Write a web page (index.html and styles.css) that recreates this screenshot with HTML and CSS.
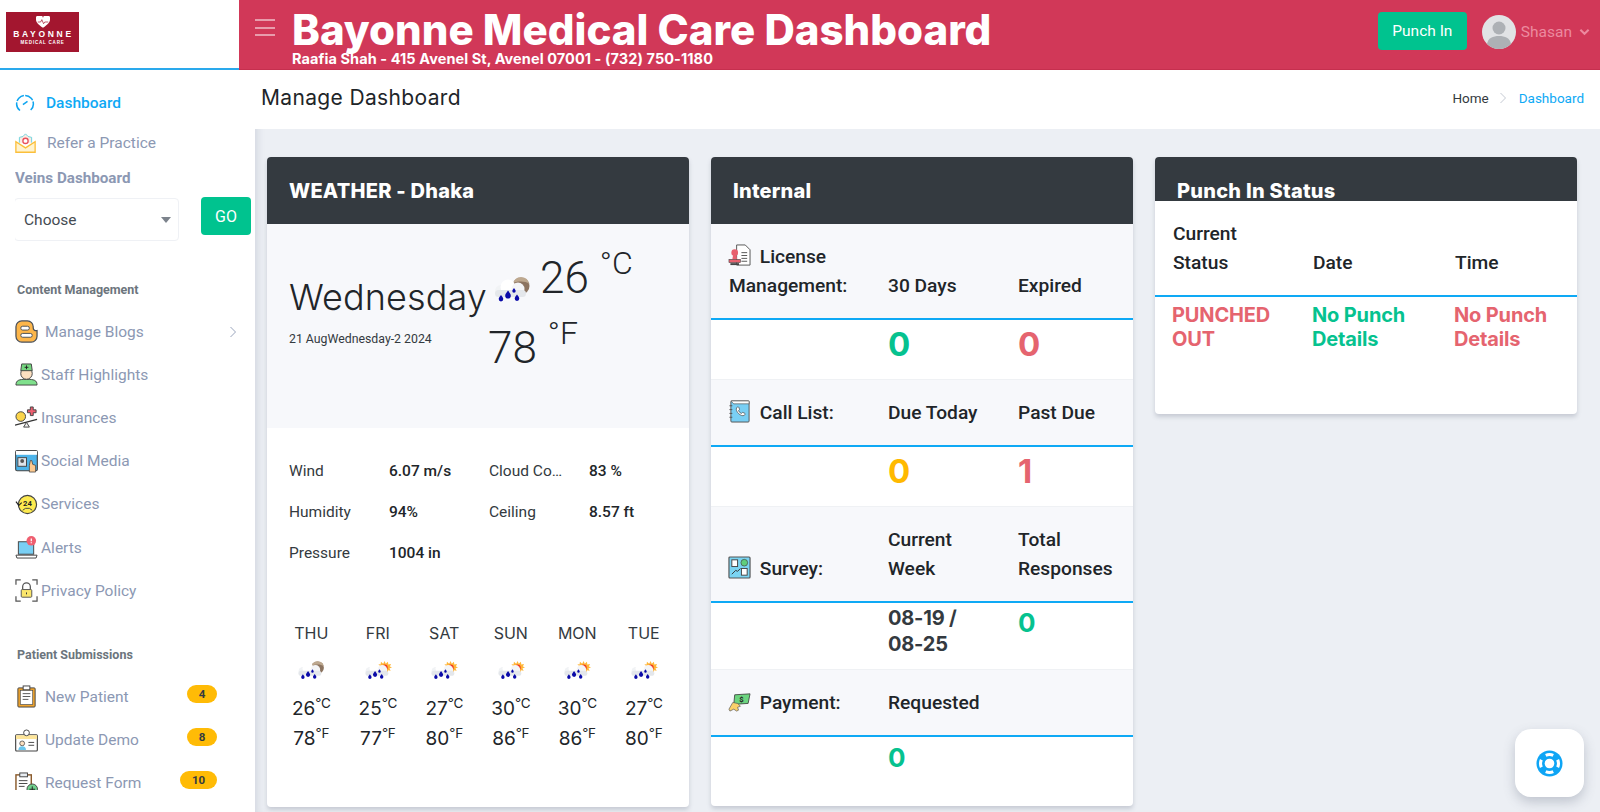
FILE: index.html
```html
<!DOCTYPE html>
<html lang="en">
<head>
<meta charset="utf-8">
<title>Bayonne Medical Care Dashboard</title>
<link rel="stylesheet" href="styles.css">
</head>
<body>
<svg class="defs" aria-hidden="true">
  <symbol id="w-cloud" viewBox="0 0 38 27">
    <circle cx="8" cy="14" r="6" fill="#f1f3f5"/><circle cx="15" cy="10" r="7.500" fill="#fff"/><circle cx="25" cy="12" r="6.500" fill="#f4f5f7"/>
    <rect x="2" y="13" width="31" height="7" rx="3.500" fill="#e4e7eb"/>
    <path d="M15 13.500c1.800 2.500 2.800 3.600 2.800 5.200a2.800 2.800 0 0 1-5.600 0c0-1.600 1-2.700 2.800-5.200zM8 18c1.400 1.800 2.300 2.800 2.300 4.100a2.300 2.300 0 0 1-4.600 0C5.700 20.800 6.600 19.800 8 18zM24 17.500c1.400 1.800 2.300 2.800 2.300 4.100a2.300 2.300 0 0 1-4.600 0c0-1.300.9-2.300 2.300-4.100zM21 11c1 1.400 1.700 2.100 1.700 3.100a1.700 1.700 0 0 1-3.400 0c0-1 .7-1.700 1.700-3.100z" fill="#0a0aa8"/>
  </symbol>
  <symbol id="w-moon" viewBox="0 0 38 27">
    <circle cx="28" cy="9" r="8.500" fill="#8c7460"/><path d="M20 6a8.500 8.500 0 0 1 16.300 1c-4-3-10-3-16.300-1z" fill="#bda88f"/>
    <use href="#w-cloud" width="38" height="27"/>
  </symbol>
  <symbol id="w-sun" viewBox="0 0 38 27">
    <path d="M28 0l1.500 3.500 3-2.500.5 3.700 3.700-.7-1.700 3.300L38 8.500l-3.500 1.500 1.700 3.300-3.700-.7-.5 3.700-3-2.500-1.500 3.500-1.500-3.500-3 2.500-.5-3.700-3.700.7 1.700-3.300L17 8.500l3.500-1.200-1.700-3.300 3.700.7.500-3.700 3 2.500z" fill="#ffb638"/><circle cx="28" cy="9" r="4.200" fill="#ef3b24"/>
    <use href="#w-cloud" width="38" height="27"/>
  </symbol>
</svg>

<div class="app">
  <header class="header">
    <div class="brand">
      <div class="logo">
        <svg class="logo-heart" viewBox="0 0 24 20"><path d="M12 20C4 14 0 10 0 5.500A5.500 5.500 0 0 1 12 3a5.500 5.500 0 0 1 12 2.500C24 10 20 14 12 20z" fill="#fff"/><path d="M3 10h5l2-4 3 7 2-3h6" fill="none" stroke="#a3152f" stroke-width="1.200"/></svg>
        <div class="logo-name">BAYONNE</div>
        <div class="logo-sub">MEDICAL CARE</div>
      </div>
    </div>
    <div class="topbar">
      <div class="burger"><span></span><span></span><span></span></div>
      <div class="title-block">
        <div class="title">Bayonne Medical Care Dashboard</div>
        <div class="subtitle">Raafia Shah - 415 Avenel St, Avenel 07001 - (732) 750-1180</div>
      </div>
      <button class="punch-btn">Punch In</button>
      <div class="user">
        <svg class="avatar" viewBox="0 0 34 34"><circle cx="17" cy="17" r="17" fill="#e1e3e5"/><circle cx="17" cy="13" r="6.500" fill="#adb1b5"/><path d="M5 29c1-6 6-8 12-8s11 2 12 8a17 17 0 0 1-24 0z" fill="#adb1b5"/></svg>
        <span class="user-name">Shasan</span>
        <svg class="user-caret" viewBox="0 0 12 8"><path d="M1.500 1.500L6 6l4.500-4.500" fill="none" stroke="currentColor" stroke-width="2.200"/></svg>
      </div>
    </div>
  </header>

  <div class="body-row">
    <aside class="sidebar">
      <nav class="nav">
        <a class="nav-top active">
          <svg class="ico ico-dash" viewBox="0 0 24 24"><path d="M6 21a10 10 0 1 1 12 0" fill="none" stroke="#0ea5f0" stroke-width="1.800" stroke-dasharray="11 1.500"/><path d="M9.500 14L15 10" stroke="#0ea5f0" stroke-width="1.800"/></svg>
          <span>Dashboard</span>
        </a>
        <a class="nav-top">
          <svg class="ico ico-refer" viewBox="0 0 24 24"><path d="M5 11V5l4-1 3-3 3 3 4 1v6" fill="#fde9e2" stroke="#5fd0da"/><circle cx="12" cy="9" r="3" fill="#fff" stroke="#e8505b" stroke-width="1.500"/><path d="M1 10v12h22V10l-11 7z" fill="#fff3cf" stroke="#fbbf3a" stroke-width="1.500"/></svg>
          <span class="refer-text">Refer a Practice</span>
        </a>
        <div class="veins">Veins Dashboard</div>
        <div class="choose-row">
          <div class="select"><span>Choose</span><i class="select-caret"></i></div>
          <button class="go">GO</button>
        </div>

        <div class="section first">Content Management</div>
        <a class="item wide">
          <svg class="ico" viewBox="0 0 24 24"><path d="M7 1h6a6 6 0 0 1 6 6v1a3 3 0 0 0 4 3v6a6 6 0 0 1-6 6H7a6 6 0 0 1-6-6V7a6 6 0 0 1 6-6z" fill="#fdb64a" stroke="#4a4f57" stroke-width="1.300"/><rect x="6" y="6.500" width="9" height="4" rx="2" fill="#fff" stroke="#4a4f57"/><rect x="6" y="14" width="12" height="4" rx="2" fill="#fff" stroke="#4a4f57"/></svg>
          <span>Manage Blogs</span>
          <svg class="chev" viewBox="0 0 8 12"><path d="M1.500 1l5 5-5 5" fill="none" stroke="#9aa5bd"/></svg>
        </a>
        <a class="item">
          <svg class="ico" viewBox="0 0 24 24"><path d="M1 23c0-5 3-6 11-6s11 1 11 6z" fill="#7fe08c" stroke="#444"/><circle cx="12" cy="11" r="6" fill="#fde0c0" stroke="#444"/><path d="M7 1h10l1 7H6z" fill="#74d67f" stroke="#444"/><path d="M12 2.500v4M10 4.500h4" stroke="#222"/></svg>
          <span>Staff Highlights</span>
        </a>
        <a class="item">
          <svg class="ico" viewBox="0 0 24 24"><circle cx="6" cy="11" r="5" fill="#fbd44b" stroke="#444"/><path d="M14 5h3V2h3v3h3v3h-3v3h-3V8h-3z" fill="#ef5f70" stroke="#444" transform="translate(-1 -1)"/><path d="M0 20L23 14" stroke="#333" stroke-width="1.200"/><path d="M9 22l3-5 3 5z" fill="#eee" stroke="#444"/></svg>
          <span>Insurances</span>
        </a>
        <a class="item">
          <svg class="ico" viewBox="0 0 24 24"><rect x=".7" y=".7" width="22.600" height="21" rx="1.500" fill="#4db4ea" stroke="#444" stroke-width="1.200"/><rect x="1" y="1" width="22" height="4" fill="#fff"/><rect x="3" y="8" width="9" height="9" fill="#dfe4ea" stroke="#444"/><circle cx="7.500" cy="11.500" r="2" fill="#555"/><path d="M15 23v-7l1-5 1.500 0 1 4 3 1v7z" fill="#fcc98f" stroke="#444" stroke-width=".8"/></svg>
          <span>Social Media</span>
        </a>
        <a class="item">
          <svg class="ico" viewBox="0 0 24 24"><circle cx="13" cy="12" r="9.500" fill="#fdea4f" stroke="#444" stroke-width="1.200"/><path d="M1 9l3 4 3-3" fill="none" stroke="#222" stroke-width="1.200"/><path d="M8 18l3-2h4l3 2" fill="none" stroke="#444"/><text class="ico-24" x="13" y="13.500">24</text></svg>
          <span>Services</span>
        </a>
        <a class="item">
          <svg class="ico" viewBox="0 0 24 24"><rect x="3.500" y="6" width="16" height="13" fill="#79cff4" stroke="#444"/><path d="M1 20h22l-1 3H2z" fill="#fff" stroke="#444"/><circle cx="17" cy="5" r="5" fill="#ef5f70"/><path d="M17 2.500v3M17 6.500v1" stroke="#fff" stroke-width="1.300"/></svg>
          <span>Alerts</span>
        </a>
        <a class="item">
          <svg class="ico" viewBox="0 0 24 24"><path d="M1 6V1h5M18 1h5v5M23 18v5h-5M6 23H1v-5" fill="none" stroke="#555" stroke-width="1.300"/><path d="M8 11V8a4 4 0 0 1 8 0v3" fill="none" stroke="#555" stroke-width="1.300"/><rect x="6.500" y="11" width="11" height="8" rx="1" fill="#fbe66b" stroke="#555"/><path d="M12 14v2" stroke="#333"/></svg>
          <span>Privacy Policy</span>
        </a>

        <div class="section second">Patient Submissions</div>
        <a class="item wide">
          <svg class="ico" viewBox="0 0 24 24"><rect x="3" y="3" width="18" height="20" rx="1" fill="#f2a52c" stroke="#444"/><rect x="5.500" y="5.500" width="13" height="15" fill="#fff" stroke="#444" stroke-width=".7"/><rect x="8.500" y="1" width="7" height="4" fill="#fff" stroke="#444"/><path d="M8 9h8M8 12h8M8 15h6" stroke="#444" stroke-width=".9"/></svg>
          <span>New Patient</span>
          <b class="badge">4</b>
        </a>
        <a class="item wide">
          <svg class="ico" viewBox="0 0 24 24"><rect x=".7" y="6" width="22.600" height="17" rx="1" fill="#fff" stroke="#444" stroke-width="1.200"/><rect x="1" y="6.500" width="22" height="4" fill="#fde59a"/><circle cx="12" cy="4" r="3" fill="#fff" stroke="#444"/><circle cx="7.500" cy="15" r="2.500" fill="#fde0c0" stroke="#444" stroke-width=".8"/><path d="M3.500 22c0-3 2-4 4-4s4 1 4 4z" fill="#6cc7ee"/><path d="M14 14h6M14 17h6" stroke="#444"/></svg>
          <span>Update Demo</span>
          <b class="badge">8</b>
        </a>
        <a class="item wide">
          <svg class="ico" viewBox="0 0 24 24"><rect x="1" y="3" width="16" height="20" fill="#fff" stroke="#8a5a2b" stroke-width="1.500"/><rect x="5" y="1" width="8" height="4" fill="#e8edf2" stroke="#444"/><path d="M4 9h9M4 12h9M4 15h6" stroke="#444"/><circle cx="18" cy="18" r="5.500" fill="#6fd08c" stroke="#444"/><path d="M18 15v6M15 18h6" stroke="#222"/></svg>
          <span>Request Form</span>
          <b class="badge badge-wide">10</b>
        </a>
      </nav>
    </aside>

    <main class="main">
      <div class="pagehead">
        <h1 class="page-title">Manage Dashboard</h1>
        <div class="crumbs">
          <span class="crumb-home">Home</span>
          <svg class="crumb-sep" viewBox="0 0 8 12"><path d="M1.500 1l5 5-5 5" fill="none" stroke="#c5cad3"/></svg>
          <span class="crumb-now">Dashboard</span>
        </div>
      </div>

      <div class="cards">
        <section class="card">
          <div class="card-head tall">WEATHER - Dhaka</div>
          <div class="wx-panel">
            <div class="wx-left">
              <div class="wx-day">Wednesday</div>
              <div class="wx-date">21 AugWednesday-2 2024</div>
            </div>
            <div class="wx-right">
              <div class="wx-line">
                <svg class="wx-icon"><use href="#w-moon"/></svg>
                <span class="wx-temp">26</span><span class="wx-unit">°C</span>
              </div>
              <div class="wx-line">
                <span class="wx-temp">78</span><span class="wx-unit">°F</span>
              </div>
            </div>
          </div>
          <div class="stats">
            <span>Wind</span><strong>6.07 m/s</strong><span>Cloud Cover</span><strong>83 %</strong>
            <span>Humidity</span><strong>94%</strong><span>Ceiling</span><strong>8.57 ft</strong>
            <span>Pressure</span><strong>1004 in</strong>
          </div>
          <div class="forecast">
            <div class="fc"><div class="fc-day">THU</div><svg class="fc-icon"><use href="#w-moon"/></svg><div class="fc-t">26<sup>°C</sup></div><div class="fc-t">78<sup>°F</sup></div></div>
            <div class="fc"><div class="fc-day">FRI</div><svg class="fc-icon"><use href="#w-sun"/></svg><div class="fc-t">25<sup>°C</sup></div><div class="fc-t">77<sup>°F</sup></div></div>
            <div class="fc"><div class="fc-day">SAT</div><svg class="fc-icon"><use href="#w-sun"/></svg><div class="fc-t">27<sup>°C</sup></div><div class="fc-t">80<sup>°F</sup></div></div>
            <div class="fc"><div class="fc-day">SUN</div><svg class="fc-icon"><use href="#w-sun"/></svg><div class="fc-t">30<sup>°C</sup></div><div class="fc-t">86<sup>°F</sup></div></div>
            <div class="fc"><div class="fc-day">MON</div><svg class="fc-icon"><use href="#w-sun"/></svg><div class="fc-t">30<sup>°C</sup></div><div class="fc-t">86<sup>°F</sup></div></div>
            <div class="fc"><div class="fc-day">TUE</div><svg class="fc-icon"><use href="#w-sun"/></svg><div class="fc-t">27<sup>°C</sup></div><div class="fc-t">80<sup>°F</sup></div></div>
          </div>
        </section>

        <section class="card">
          <div class="card-head tall">Internal</div>
          <div class="int-row head">
            <div class="int-label"><svg class="int-ico" viewBox="0 0 24 24"><path d="M9 1h9l5 5v16H9z" fill="#fff" stroke="#555"/><path d="M14 9h6M14 12h6M14 15h6M14 18h6" stroke="#555"/><circle cx="7" cy="9" r="3.500" fill="#e8606e"/><path d="M5.500 11h3l1 5h-5z" fill="#e8606e"/><rect x="1" y="16" width="12" height="3.500" fill="#e8606e" stroke="#444" stroke-width=".6"/><rect x="2.500" y="20" width="9" height="2" fill="#444"/></svg> License Management:</div>
            <div class="int-cell">30 Days</div><div class="int-cell">Expired</div>
          </div>
          <div class="int-row vals">
            <div></div><div class="big green">0</div><div class="big red">0</div>
          </div>
          <div class="int-row head">
            <div class="int-label"><svg class="int-ico" viewBox="0 0 24 24"><rect x="3" y="1" width="19" height="22" rx="1" fill="#79cff4" stroke="#555"/><path d="M3 1l19 0v3H6z" fill="#fff" stroke="#555" stroke-width=".7"/><path d="M1.500 6h3M1.500 10h3M1.500 14h3M1.500 18h3" stroke="#555"/><path d="M9 8c1-1 2-1 2.500 0l.5 2-1 1c.5 1.500 1.500 2.500 3 3l1-1 2 .5c1 .5 1 1.500 0 2.500-3 2-10-4-8-8z" fill="#fff" stroke="#444" stroke-width=".7"/></svg> Call List:</div>
            <div class="int-cell">Due Today</div><div class="int-cell">Past Due</div>
          </div>
          <div class="int-row vals">
            <div></div><div class="big yellow">0</div><div class="big red">1</div>
          </div>
          <div class="int-row head">
            <div class="int-label"><svg class="int-ico" viewBox="0 0 24 24"><rect x="1" y="1" width="22" height="22" rx="1" fill="#7ad4f2" stroke="#555" stroke-width="1.200"/><rect x="4" y="4" width="6" height="7" fill="#fff" stroke="#444"/><circle cx="17" cy="7" r="3.500" fill="#5fce7c" stroke="#444" stroke-width=".7"/><path d="M4 19l4-4 2 1 3-3" fill="none" stroke="#333"/><rect x="14" y="13" width="6" height="7" fill="#fff" stroke="#444"/></svg> Survey:</div>
            <div class="int-cell">Current Week</div><div class="int-cell">Total Responses</div>
          </div>
          <div class="int-row vals dates">
            <div></div><div class="date-range">08-19 / 08-25</div><div class="mid green">0</div>
          </div>
          <div class="int-row head">
            <div class="int-label"><svg class="int-ico" viewBox="0 0 24 24"><path d="M7 5l16-1-2 10-15 1z" fill="#6cd47f" stroke="#333" stroke-width=".8"/><text class="ico-dollar" x="14" y="12">$</text><path d="M1 20l4-7 5 1 3 3-3 1 1 3-2 1-3-2-4 2z" fill="#fad06a" stroke="#555" stroke-width=".7"/></svg> Payment:</div>
            <div class="int-cell">Requested</div><div></div>
          </div>
          <div class="int-row vals last">
            <div></div><div class="mid green">0</div><div></div>
          </div>
        </section>

        <section class="card punch-card">
          <div class="card-head short">Punch In Status</div>
          <div class="punch-grid head">
            <div>Current Status</div><div>Date</div><div>Time</div>
          </div>
          <div class="punch-grid vals">
            <div class="red">PUNCHED OUT</div><div class="green">No Punch Details</div><div class="red">No Punch Details</div>
          </div>
        </section>
      </div>
    </main>
  </div>

  <button class="fab" aria-label="Help">
    <svg viewBox="0 0 28 28"><circle cx="14" cy="14" r="13.500" fill="#0ea5f5"/><circle cx="14" cy="14" r="5" fill="#fff"/><g stroke="#fff" stroke-width="3.200" fill="none"><path d="M10.100 5.570A9.300 9.300 0 0 1 17.900 5.570"/><path d="M10.100 22.430A9.300 9.300 0 0 0 17.900 22.430"/><path d="M5.570 10.100A9.300 9.300 0 0 0 5.570 17.900"/><path d="M22.430 10.100A9.300 9.300 0 0 1 22.430 17.900"/></g></svg>
  </button>
</div>
</body>
</html>
```

FILE: styles.css
```css
* { box-sizing: border-box; }
html, body { margin: 0; padding: 0; height: 100%; overflow: hidden; }
body { font-family: Roboto, "Liberation Sans", sans-serif; color: #212529; background: #eceff4; }
.defs { position: absolute; width: 0; height: 0; }

.app { position: relative; display: flex; flex-direction: column; height: 812px; overflow: hidden; }

/* header */
.header { display: flex; height: 70px; flex: none; }
.brand { width: 239px; background: #fff; border-bottom: 2px solid #2aa9ec; padding: 12px 0 0 6px; }
.logo { width: 73px; height: 40px; background: #a3162f; color: #fff; display: flex; flex-direction: column; align-items: center; }
.logo-heart { width: 14px; height: 12px; margin-top: 4px; }
.logo-name { font: 700 8.500px/10px "Liberation Sans", sans-serif; letter-spacing: 2.700px; margin-top: 1px; padding-left: 2px; }
.logo-sub { font: 700 4.500px/6px "Liberation Sans", sans-serif; letter-spacing: .8px; margin-top: 1px; }
.topbar { flex: 1; display: flex; background: #d13858; border-bottom: 1px solid #c52f4e; padding-left: 16px; color: #fff; }
.burger { width: 20px; margin-top: 19px; height: 17px; display: flex; flex-direction: column; justify-content: space-between; }
.burger span { height: 2px; background: rgba(255, 255, 255, .5); }
.title-block { margin-left: 17px; flex: 1; min-width: 0; }
.title { font: 800 42px/44px Inter, sans-serif; margin-top: 8px; white-space: nowrap; }
.subtitle { font: 700 14.500px/16px Inter, sans-serif; letter-spacing: .08px; margin-top: -1px; white-space: nowrap; }
.punch-btn { width: 89px; height: 38px; margin-top: 12px; border: 0; border-radius: 4px; background: #00c38f; color: #fff; font: 400 15.500px Roboto, sans-serif; }
.user { display: flex; align-items: center; height: 34px; margin: 15px 10px 0 15px; }
.avatar { width: 34px; height: 34px; }
.user-name { margin-left: 5px; font-size: 15.500px; color: #ec8a9f; }
.user-caret { width: 11px; height: 8px; margin-left: 7px; color: #ec8a9f; }

/* layout */
.body-row { flex: 1; display: flex; min-height: 0; }
.sidebar { width: 255px; flex: none; background: #fff; padding: 13px 0 0 15px; }
.nav { height: 707px; overflow: hidden; }
.ico { width: 23px; height: 23px; flex: none; }

.nav-top { display: flex; align-items: center; height: 40px; font-size: 15.500px; color: #8c98b3; }
.nav-top .ico { width: 20px; height: 20px; }
.nav-top.active { color: #0ea9f5; font-weight: 500; }
.nav-top.active span { margin-left: 11px; }
.nav-top .ico-refer { width: 21px; height: 21px; }
.refer-text { margin-left: 11px; }
.veins { font-size: 15.200px; font-weight: 700; color: #8c98b3; line-height: 30px; height: 31px; }
.choose-row { display: flex; align-items: flex-start; margin-top: 4px; }
.select { width: 165px; height: 43px; margin-left: -1px; border: 1px solid #eff1f5; border-radius: 4px; display: flex; align-items: center; justify-content: space-between; padding: 0 7px 0 9px; font-size: 15.500px; color: #454b52; }
.select-caret { border: 5px solid transparent; border-top: 6px solid #7c838c; border-bottom: 0; }
.go { width: 50px; height: 38px; margin: -1px 0 0 22px; border: 0; border-radius: 4px; background: #00c38f; color: #fff; font: 400 16px Roboto, sans-serif; }
.section { font-size: 12.500px; font-weight: 700; color: #6c757d; height: 41px; line-height: 42px; padding-left: 2px; }
.section.first { margin-top: 28px; }
.section.second { margin-top: 22px; }
.item { display: flex; align-items: center; height: 43.200px; font-size: 15.500px; color: #8c98b3; padding-right: 18px; gap: 3px; }
.item.wide { gap: 7px; }
.chev { width: 8px; height: 12px; margin-left: auto; }
.badge { margin-left: auto; margin-right: 20px; margin-bottom: 6px; min-width: 30px; height: 18px; padding: 0 10px; border-radius: 9px; background: #ffbb06; color: #343a40; font-size: 11.500px; font-weight: 700; line-height: 18px; text-align: center; }
.badge-wide { min-width: 37px; }
.ico-24 { font: 700 8px Roboto, sans-serif; text-anchor: middle; fill: #222; }
.ico-dollar { font: 700 8px Roboto, sans-serif; text-anchor: middle; fill: #222; }

.main { flex: 1; min-width: 0; box-shadow: inset 8px 0 8px -6px rgba(90, 100, 120, .18); }
.pagehead { height: 59px; background: #fff; display: flex; align-items: center; justify-content: space-between; padding: 0 16px 4px 6px; }
.page-title { margin: 0; font: 400 21px/26px Inter, sans-serif; color: #212529; letter-spacing: .35px; }
.crumbs { display: flex; align-items: center; font-size: 13.500px; }
.crumb-home { color: #343a40; }
.crumb-sep { width: 8px; height: 12px; margin: 0 12px 0 10px; }
.crumb-now { color: #0ea9f5; }

.cards { display: grid; grid-template-columns: repeat(3, 422px); gap: 22px; align-items: start; padding: 28px 0 0 12px; }
.card { background: #fff; border-radius: 4px; box-shadow: 0 3px 4px rgba(90, 100, 120, .25); overflow: hidden; }
.card-head { background: #343a40; color: #fff; font: 800 20px/24px Inter, sans-serif; letter-spacing: .25px; padding: 0 22px; }
.card-head.tall { height: 67px; padding-top: 22px; }
.card-head.short { height: 44px; padding-top: 22px; line-height: 24px; }

/* weather */
.wx-panel { height: 204px; background: #f7f8fb; display: flex; padding: 19px 0 0 22px; }
.wx-left { width: 199px; padding-top: 32px; }
.wx-day { font: 300 36px/44px Inter, sans-serif; color: #212529; letter-spacing: .1px; white-space: nowrap; }
.wx-date { font-size: 12.300px; line-height: 16px; margin-top: 12px; color: #343a40; }
.wx-right { flex: 1; }
.wx-line { display: flex; align-items: flex-start; height: 70px; }
.wx-icon { width: 38px; height: 27px; margin: 34px 9px 0 5px; flex: none; }
.wx-temp { font-size: 44px; font-weight: 350; line-height: 70px; }
.wx-unit { font-size: 32px; font-weight: 350; line-height: 36px; margin: 2px 0 0 11px; }

.stats { display: grid; grid-template-columns: 100px 100px 100px 1fr; grid-auto-rows: 41px; align-items: center; padding: 22px 0 0 22px; font-size: 15.500px; color: #343a40; }
.stats span { max-width: 75px; overflow: hidden; text-overflow: ellipsis; white-space: nowrap; }
.stats strong { font-weight: 500; color: #212529; }

.forecast { display: grid; grid-template-columns: repeat(6, 66.500px); padding: 48px 0 53px 11px; text-align: center; }
.fc-day { font: 400 16px/24px Inter, sans-serif; color: #343a40; }
.fc-icon { display: block; width: 28px; height: 20px; margin: 16px auto 13px; }
.fc-t { font: 400 19px/30px Inter, sans-serif; color: #212529; }
.fc-t sup { font-size: 13.500px; line-height: 0; vertical-align: 7px; letter-spacing: -.3px; }

/* internal */
.int-row { display: grid; grid-template-columns: 177px 130px 1fr; }
.int-row.head { background: #f7f8fb; border-bottom: 2px solid #0ea9f5; align-items: end; font-size: 19.200px; font-weight: 500; line-height: 29px; padding: 17.500px 0 18.500px; color: #212529; }
.int-label { padding-left: 18px; padding-right: 20px; }
.int-cell { padding-right: 10px; }
.int-cell:nth-child(2) { padding-right: 22px; }
.int-ico { width: 23px; height: 23px; vertical-align: -4px; margin-right: 4px; margin-left: -1px; }
.int-row.vals { height: 60px; border-bottom: 1px solid #eff1f4; align-items: start; padding-top: 4px; }
.int-row.vals.dates { height: 67px; padding-top: 2px; }
.int-row.vals.last { height: 69px; padding-top: 3px; border-bottom: 0; }
.big { font: 700 33px/40px Inter, sans-serif; }
.mid { font: 700 26px/36px Inter, sans-serif; }
.date-range { font: 700 20px/26px Inter, sans-serif; color: #343a40; padding-right: 30px; letter-spacing: -.2px; }
.green { color: #06c28f; }
.red { color: #e5646f; }
.yellow { color: #ffb900; }

/* punch */
.punch-card { height: 257px; }
.punch-grid { display: grid; grid-template-columns: 140px 142px 1fr; padding-left: 18px; }
.punch-grid.head { align-items: end; font-size: 19.200px; font-weight: 500; line-height: 29px; padding-top: 18px; padding-bottom: 18px; border-bottom: 2px solid #0ea9f5; }
.punch-grid.head > div { padding-right: 40px; }
.punch-grid.vals { font: 700 20px/24px Inter, sans-serif; padding-top: 6px; padding-left: 17px; letter-spacing: -.15px; }
.punch-grid.vals > div { padding-right: 20px; }

/* help */
.fab { position: absolute; left: 1515px; top: 729px; width: 69px; height: 68px; padding: 0; border: 0; border-radius: 16px; background: #fff; box-shadow: 0 5px 12px rgba(90, 100, 120, .3); display: flex; align-items: center; justify-content: center; }
.fab svg { width: 27px; height: 27px; }
```
